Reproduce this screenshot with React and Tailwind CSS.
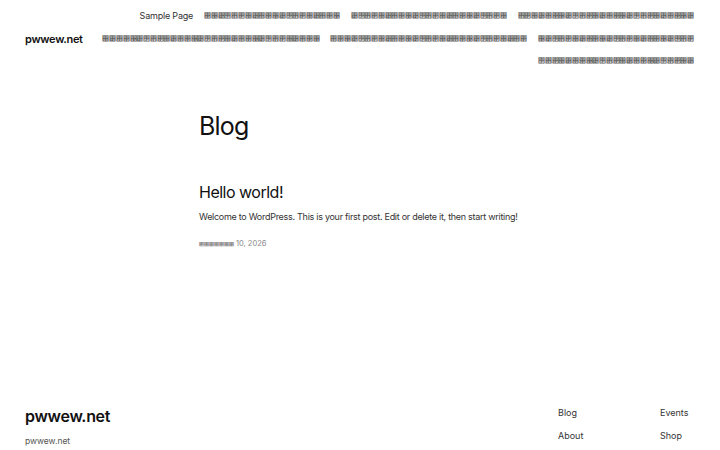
import React from "react";

const unassigned = [0x0378, 0x0379, 0x0380, 0x0381, 0x0382, 0x0383, 0x038b, 0x038d, 0x03a2];
const glyphs = (n, seed) =>
  Array.from({ length: n }, (_, i) => String.fromCodePoint(unassigned[(seed * 5 + i * 7) % unassigned.length])).join("");

const navItems = [
  { label: "Sample Page", latin: true },
  { label: glyphs(20, 1) },
  { label: glyphs(23, 2) },
  { label: glyphs(26, 3) },
  { label: glyphs(32, 4) },
  { label: glyphs(29, 5) },
  { label: glyphs(23, 6) },
  { label: glyphs(23, 7) },
];

const footerLinks = [
  ["Blog", "About"],
  ["Events", "Shop"],
];

const Header = () => (
  <header className="flex items-center justify-between pl-[25px] pr-[26px] pt-[5px]">
    <a className="text-[11px] font-semibold tracking-[-0.3px] text-[#111] whitespace-nowrap">pwwew.net</a>
    <nav className="ml-[10px]">
      <ul className="flex flex-wrap justify-end gap-x-[11px] leading-[22.5px] text-[#222]">
        {navItems.map((item) => (
          <li
            key={item.label}
            className={
              item.latin
                ? "whitespace-nowrap text-[9px] tracking-[-0.2px] text-[#333]"
                : "whitespace-nowrap text-[7px] tracking-[-0.22px] text-[#666]"
            }
          >
            <a>{item.label}</a>
          </li>
        ))}
      </ul>
    </nav>
  </header>
);

const Post = () => (
  <article>
    <h2 className="text-[16px] leading-[24px] text-[#111] tracking-[-0.5px]">Hello world!</h2>
    <p className="mt-[5px] text-[9px] leading-[16px] tracking-[-0.28px] text-[#333] whitespace-nowrap">
      Welcome to WordPress. This is your first post. Edit or delete it, then start writing!
    </p>
    <div className="mt-[13px] flex items-baseline gap-[2px] text-[7.5px] leading-[12px] text-[#888]">
      <span className="text-[5px]">{glyphs(7, 8)}</span>
      <span>10, 2026</span>
    </div>
  </article>
);

const Footer = () => (
  <footer className="flex justify-between pl-[25px] pr-[25px] pt-[154px]">
    <div>
      <div className="text-[16px] font-semibold leading-[24px] tracking-[-0.3px] text-[#111]">pwwew.net</div>
      <div className="mt-[6px] text-[8.5px] leading-[14px] text-[#555]">pwwew.net</div>
    </div>
    <div className="flex pt-[2px]">
      {footerLinks.map((col, i) => (
        <ul key={i} className={i === 0 ? "w-[102px]" : "w-[35px]"}>
          {col.map((link) => (
            <li key={link} className="mb-[9px] text-[9px] leading-[14px] text-[#333]">
              {link}
            </li>
          ))}
        </ul>
      ))}
    </div>
  </footer>
);

export default function App() {
  return (
    <div className="min-h-screen bg-white font-['Inter',sans-serif]">
      <Header />
      <main className="pl-[199px] pt-[37px]">
        <h1 className="text-[25px] leading-[32px] text-[#111] tracking-[-0.8px]">Blog</h1>
        <div className="mt-[38px]">
          <Post />
        </div>
      </main>
      <Footer />
    </div>
  );
}
